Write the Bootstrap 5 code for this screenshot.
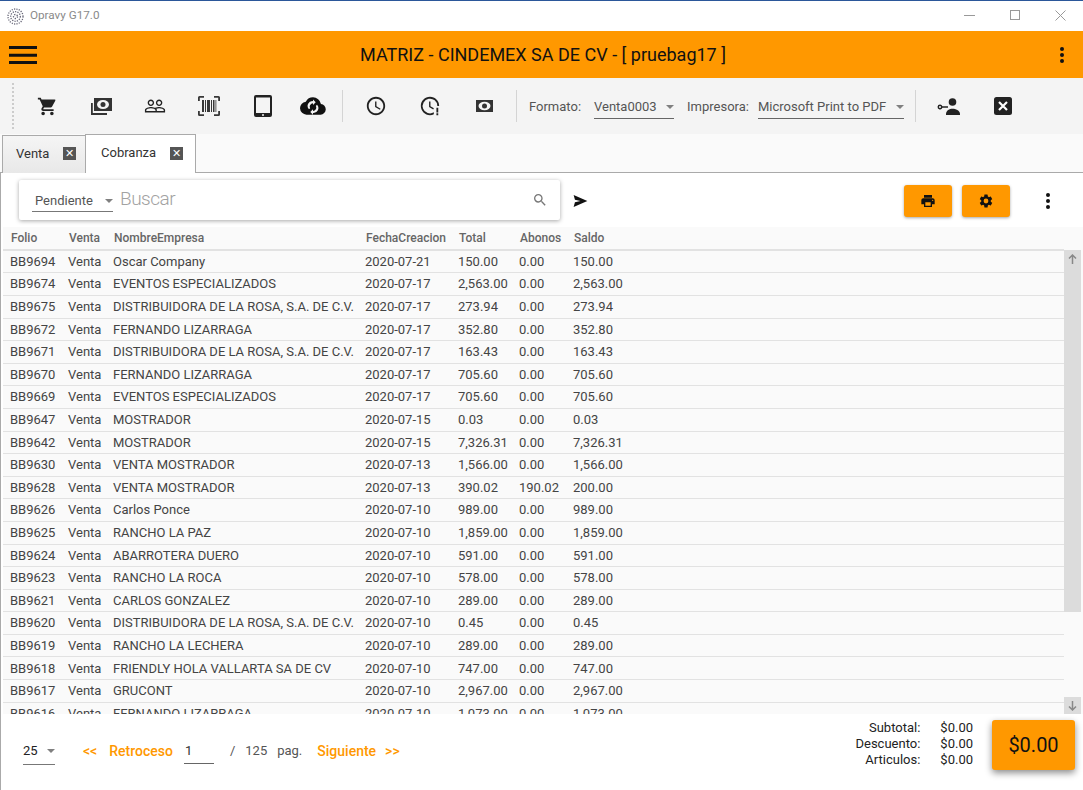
<!doctype html>
<html lang="es"><head><meta charset="utf-8"><title>Opravy G17.0</title>
<link rel="stylesheet" href="https://cdn.jsdelivr.net/npm/bootstrap@5.3.0/dist/css/bootstrap.min.css">
<style>
html,body{height:790px;overflow:hidden}
body{font-family:Roboto,"Liberation Sans",sans-serif;font-size:13px;color:#333;background:#fff}
svg{display:block}
.win{height:790px;width:1083px;overflow:hidden}
.titlebar{height:31px;border-top:1px solid #2b579a;color:#8a8a8a;font-size:11.7px}
.wicon{width:17px;height:17px;margin-left:7px;margin-right:6px}
.wctlgroup{margin-bottom:2px}
.wctl{width:45.500px}
.appbar{height:47px;background:#ff9800;color:#111;font-size:18px}
.burger{margin-left:9px}
.apptitle{margin-right:10px}
.appkebab{margin-right:18px}
.toolbar{height:56px;background:#f4f4f4;padding-left:12px}
.grip{width:2px;height:46px;border-left:2px dotted #ccc;margin-right:6px}
.tbtn{width:54px;height:40px;color:#222}
.tbtn-cloud{width:46px}
.tbtn-user{width:66px}
.tbtn-close{width:42px}
.tsep{width:1px;height:32px;background:#d4d4d4}
.tsep-a{margin:0 6px}
.tsep-b{margin-left:5px}
.tlabel{color:#555;margin-top:2px}
.tlabel-first{margin-left:12px}
.fsel{border-bottom:1px solid #666;color:#555;height:26px;padding-top:2px}
.caret{width:0;height:0;border-left:4px solid transparent;border-right:4px solid transparent;border-top:4px solid #808080}
.fsel-a{width:80px;margin:0 13px 0 13px}
.fsel-b{width:146px;margin:0 11px 0 9px}
.tabstrip{height:39px;background:#fafafa;border-bottom:1px solid #aaa;padding-left:2px}
.tabitem{height:38px;border:1px solid #aaa;border-bottom:0;background:linear-gradient(#f5f5f5,#e8e8e8);color:#333;margin-top:1px;padding-left:13px;padding-bottom:2px}
.tabitem.is-on{background:#fff;height:39px;margin-top:0;margin-bottom:-1px;z-index:1;padding-left:15px;margin-left:-1px;padding-bottom:2px}
.tab-a{width:84px}
.tab-b{width:111px}
.tabx{width:13px;height:13px;background:#555;color:#fff;margin-left:14px;font-size:11px;line-height:13px}
.mainpane{height:617px;border-left:1px solid #aaa}
.searchrow{height:54px}
.searchbox{width:541px;height:40px;margin-left:18px;box-shadow:0 1px 4px rgba(0,0,0,.35);border-radius:2px;background:#fff;padding:0 12px 0 13px}
.psel{width:81px;height:22px;border-bottom:1px solid #777;color:#555;padding-left:3px;margin-top:2px}
.buscar{font-size:19px;letter-spacing:-.5px;color:#a2a2a2;margin-left:7px;margin-bottom:2px;font-weight:300}
.sendicon{margin-left:13px;margin-top:2px}
.actgroup{gap:10px;margin-top:2px;margin-right:7px}
.actbtn{width:48px;height:32px;background:#ff9800;border-radius:3px;box-shadow:0 1px 3px rgba(0,0,0,.35)}
.kebabcell{width:56px}
.gridouter{background:#fafafa;height:487px;margin-left:2px}
.gridwrap{height:487px;overflow:hidden}
.gridtbl{width:1061px;table-layout:fixed;border-collapse:collapse;color:#444;font-size:13px}
.gridtbl th{font-weight:500;font-size:12px;color:#666;height:23.300px;padding:0 0 0 8px;white-space:nowrap}
.gridtbl td{height:22.6px;padding:0 0 0 7px;border-top:1px solid #e2e2e2;white-space:nowrap;overflow:hidden}
.gridtbl tbody tr:first-child td{border-top:2px solid #e2e2e2}
.vscroll{width:17px;height:487px;padding-top:23px;margin-right:2px}
.vthumb{height:345px;background:#dcdcdc}
.varrow{height:17px;background:#dcdcdc}
.foot{height:76px;color:#555;padding-left:22px}
.foot>span{margin-bottom:2px}
.osel{width:32px;height:26px;border-bottom:1px solid #777;color:#222;padding-bottom:2px}
.pglink{color:#ff9800;font-weight:500;font-size:14px}
.pgin{width:30px;height:24px;border-bottom:1px solid #666;color:#333;padding-left:1px;padding-bottom:1px}
.sumgroup{align-self:flex-start;margin-top:6px}
.sumlbl{color:#222;line-height:16px;font-size:13px;margin-bottom:2px}
.sumvals{margin-left:20px}
.totbtn{width:83px;height:50px;background:#ff9800;border-radius:3px;box-shadow:0 3px 7px rgba(0,0,0,.45);font-size:20px;color:#111;margin:0 8px 0 19px}
.gapl-28{margin-left:28px}.gapl-12{margin-left:12px}.gapl-11{margin-left:11px}.gapl-16{margin-left:16px}.gapl-15{margin-left:15px}.gapl-10{margin-left:10px}.gapl-9{margin-left:9px}
</style></head><body>
<div class="win d-flex flex-column">
<div class="titlebar d-flex align-items-center">
<svg class="wicon" viewBox="0 0 17 17" fill="none" stroke="#667" stroke-width="1.3" stroke-dasharray="1.2 1.2"><circle cx="8.5" cy="8.5" r="7.5"/><circle cx="8.5" cy="8.5" r="4.8"/><circle cx="8.5" cy="8.5" r="2"/></svg>
<span>Opravy G17.0</span>
<div class="ms-auto d-flex align-items-center wctlgroup">
<div class="wctl d-flex justify-content-center"><svg width="11" height="11"><path d="M0 5.5h11" stroke="#999"/></svg></div>
<div class="wctl d-flex justify-content-center"><svg width="10" height="10"><rect x=".5" y=".5" width="9" height="9" fill="none" stroke="#999"/></svg></div>
<div class="wctl d-flex justify-content-center"><svg width="11" height="11"><path d="M.5.5l10 10M10.5.5l-10 10" stroke="#999"/></svg></div>
</div></div>

<div class="appbar d-flex align-items-center">
<svg class="burger" width="28" height="18" viewBox="0 0 28 18"><path d="M0 1.500h28M0 9.200h28M0 16.500h28" stroke="#111" stroke-width="3"/></svg>
<div class="flex-grow-1 text-center apptitle">MATRIZ - CINDEMEX SA DE CV - [ pruebag17 ]</div>
<svg class="appkebab" width="6" height="18" viewBox="0 0 6 18" fill="#111"><circle cx="3" cy="3" r="2"/><circle cx="3" cy="9" r="2"/><circle cx="3" cy="15" r="2"/></svg>
</div>

<div class="toolbar d-flex align-items-center">
<div class="grip"></div>
<div class="tbtn d-flex align-items-center justify-content-center"><svg width="21" height="21" viewBox="0 0 24 24" fill="#222"><path d="M7 18c-1.1 0-2 .9-2 2s.9 2 2 2 2-.9 2-2-.9-2-2-2zM1 2v2h2l3.6 7.59-1.35 2.45c-.16.28-.25.61-.25.96 0 1.1.9 2 2 2h12v-2H7.42c-.14 0-.25-.11-.25-.25l.03-.12.9-1.63h7.45c.75 0 1.41-.41 1.75-1.03l3.58-6.49A1 1 0 0 0 20 4H5.21l-.94-2H1zm16 16c-1.1 0-2 .9-2 2s.9 2 2 2 2-.9 2-2-.9-2-2-2z"/></svg></div>
<div class="tbtn d-flex align-items-center justify-content-center"><svg width="21" height="17" viewBox="0 0 21 17"><path d="M0 5h1.800v10H16v2H0z" fill="#333"/><rect x="3" y="0" width="18" height="13" fill="#333"/><ellipse cx="12" cy="6.500" rx="6" ry="4.500" fill="#f4f4f4"/><circle cx="12" cy="6.500" r="2.500" fill="#333"/></svg></div>
<div class="tbtn d-flex align-items-center justify-content-center"><svg width="22" height="22" viewBox="0 0 24 24" fill="#222"><path d="M16.5 13c-1.2 0-3.07.34-4.5 1-1.43-.67-3.3-1-4.5-1C5.33 13 1 14.08 1 16.25V19h22v-2.75c0-2.17-4.33-3.25-6.5-3.25zm-4 4.5h-10v-1.25c0-.54 2.56-1.75 5-1.75s5 1.21 5 1.75v1.25zm9 0H14v-1.25c0-.46-.2-.86-.52-1.22.88-.3 1.96-.53 3.02-.53 2.44 0 5 1.21 5 1.75v1.25zM7.5 12c1.93 0 3.5-1.57 3.5-3.5S9.43 5 7.5 5 4 6.57 4 8.5 5.57 12 7.5 12zm0-5.5c1.1 0 2 .9 2 2s-.9 2-2 2-2-.9-2-2 .9-2 2-2zm9 5.5c1.93 0 3.5-1.57 3.5-3.5S18.43 5 16.5 5 13 6.57 13 8.5s1.57 3.5 3.5 3.5zm0-5.5c1.1 0 2 .9 2 2s-.9 2-2 2-2-.9-2-2 .9-2 2-2z"/></svg></div>
<div class="tbtn d-flex align-items-center justify-content-center"><svg width="24" height="22" viewBox="0 0 24 22" fill="#222"><path d="M1 6V2.500A1.500 1.500 0 0 1 2.500 1H7v1.800H2.800V6zM17 1h4.500A1.500 1.500 0 0 1 23 2.500V6h-1.800V2.800H17zM1 16h1.800v3.200H7V21H2.500A1.500 1.500 0 0 1 1 19.500zM21.200 16H23v3.500a1.500 1.500 0 0 1-1.500 1.500H17v-1.800h4.200zM5 5h2v12H5zM8 5h1v12H8zM10 5h3v12h-3zM14 5h1v12h-1zM16 5h1.500v12H16zM18.500 5h.8v12h-.8z" opacity=".9"/></svg></div>
<div class="tbtn d-flex align-items-center justify-content-center"><svg width="24" height="24" viewBox="0 0 24 24" fill="#222"><path d="M19 1H5a2 2 0 0 0-2 2v18a2 2 0 0 0 2 2h14a2 2 0 0 0 2-2V3a2 2 0 0 0-2-2zm-7 21a1 1 0 1 1 0-2 1 1 0 0 1 0 2zm7-3H5V3.500h14z"/></svg></div>
<div class="tbtn tbtn-cloud d-flex align-items-center justify-content-center"><svg width="26" height="26" viewBox="0 0 24 24" fill="#111"><path fill-rule="evenodd" d="M19.350 10.040A7.490 7.490 0 0 0 12 4a7.500 7.500 0 0 0-6.650 4.040A6 6 0 0 0 6 20h13a5 5 0 0 0 .35-9.960zM12 7.500V6l2.500 2.500L12 11V9.500a3 3 0 0 0-2.600 4.500l-1.100 1.100A4.500 4.500 0 0 1 12 7.500zm0 11V20l-2.500-2.500L12 15v1.500a3 3 0 0 0 2.600-4.500l1.100-1.100A4.500 4.500 0 0 1 12 18.500z"/></svg></div>
<div class="tsep tsep-a"></div>
<div class="tbtn d-flex align-items-center justify-content-center"><svg width="22" height="22" viewBox="0 0 24 24" fill="#222"><path d="M11.990 2C6.470 2 2 6.480 2 12s4.470 10 9.990 10C17.520 22 22 17.520 22 12S17.520 2 11.990 2zM12 20c-4.420 0-8-3.580-8-8s3.580-8 8-8 8 3.580 8 8-3.580 8-8 8zm.5-13H11v6l5.250 3.150.75-1.230-4.500-2.670z"/></svg></div>
<div class="tbtn d-flex align-items-center justify-content-center"><svg width="22" height="22" viewBox="0 0 24 24" fill="#222"><path d="M12 2C6.480 2 2 6.480 2 12s4.480 10 10 10c1.500 0 2.900-.33 4.200-.92v-2.250A8 8 0 1 1 20 12h2c0-5.520-4.480-10-10-10zm.5 5H11v6l4.500 2.700.75-1.230-3.750-2.220zM19 14h2v5h-2zm0 6h2v2h-2z"/></svg></div>
<div class="tbtn d-flex align-items-center justify-content-center"><svg width="17" height="12" viewBox="0 0 17 12"><rect width="17" height="12" fill="#333"/><ellipse cx="8.500" cy="6" rx="6" ry="4.200" fill="#f4f4f4"/><circle cx="8.500" cy="6" r="2.500" fill="#333"/></svg></div>
<div class="tsep tsep-b"></div>
<span class="tlabel tlabel-first">Formato:</span>
<div class="fsel fsel-a d-flex align-items-center justify-content-between"><span>Venta0003</span><span class="caret"></span></div>
<span class="tlabel">Impresora:</span>
<div class="fsel fsel-b d-flex align-items-center justify-content-between"><span>Microsoft Print to PDF</span><span class="caret"></span></div>
<div class="tsep"></div>
<div class="tbtn tbtn-user d-flex align-items-center justify-content-center"><svg width="24" height="17" viewBox="0 0 24 17" fill="#222"><circle cx="15.500" cy="4" r="3.800"/><path d="M9 16c0-3.500 3.500-5.200 6.500-5.200S23 12.500 23 16v1H9z"/><path fill-rule="evenodd" d="M3 6.500a2.500 2.500 0 0 1 2.400 1.700H11v1.600H5.400A2.500 2.500 0 1 1 3 6.500zm0 1.500a1 1 0 1 0 0 2 1 1 0 0 0 0-2z"/></svg></div>
<div class="tbtn tbtn-close d-flex align-items-center justify-content-center"><svg width="18" height="18" viewBox="0 0 18 18"><rect width="18" height="18" rx="2.500" fill="#222"/><path d="M5 5l8 8M13 5l-8 8" stroke="#fff" stroke-width="2.200"/></svg></div>
</div>

<div class="tabstrip d-flex align-items-start">
<div class="tabitem tab-a d-flex align-items-center"><span>Venta</span><span class="tabx text-center">✕</span></div>
<div class="tabitem is-on tab-b d-flex align-items-center"><span>Cobranza</span><span class="tabx text-center">✕</span></div>
</div>

<div class="mainpane d-flex flex-column">
<div class="searchrow d-flex align-items-center">
<div class="searchbox d-flex align-items-center">
<div class="psel d-flex align-items-center justify-content-between"><span>Pendiente</span><span class="caret"></span></div>
<span class="buscar">Buscar</span>
<svg class="ms-auto" width="16" height="16" viewBox="0 0 24 24" fill="#777"><path d="M15.500 14h-.79l-.28-.27A6.470 6.470 0 0 0 16 9.500 6.500 6.500 0 1 0 9.500 16c1.610 0 3.090-.59 4.230-1.570l.27.28v.79l5 4.990L20.490 19l-4.990-5zm-6 0C7.010 14 5 11.990 5 9.500S7.010 5 9.500 5 14 7.010 14 9.500 11.990 14 9.500 14z"/></svg>
</div>
<svg class="sendicon" width="15" height="12" viewBox="0 0 16 14" fill="#111"><path d="M0 0l16 7-16 7 1.500-5.500L8 7 1.500 5.500z"/></svg>
<div class="ms-auto d-flex align-items-center actgroup">
<div class="actbtn d-flex align-items-center justify-content-center"><svg width="16" height="16" viewBox="0 0 24 24" fill="#111"><path d="M19 8H5c-1.660 0-3 1.340-3 3v6h4v4h12v-4h4v-6c0-1.660-1.340-3-3-3zm-3 11H8v-5h8v5zm3-7c-.55 0-1-.45-1-1s.45-1 1-1 1 .45 1 1-.45 1-1 1zm-1-9H6v4h12V3z"/></svg></div>
<div class="actbtn d-flex align-items-center justify-content-center"><svg width="16" height="16" viewBox="0 0 24 24" fill="#111"><path d="M19.140 12.940c.04-.3.060-.61.060-.94 0-.32-.02-.64-.07-.94l2.030-1.580a.49.49 0 0 0 .12-.61l-1.920-3.320a.49.49 0 0 0-.59-.22l-2.390.96c-.5-.38-1.030-.7-1.620-.94l-.36-2.540a.48.480 0 0 0-.48-.41h-3.840c-.24 0-.43.17-.47.41l-.36 2.540c-.59.24-1.130.57-1.620.94l-2.390-.96a.49.49 0 0 0-.59.22L2.740 8.870c-.12.21-.08.47.12.61l2.030 1.580c-.05.3-.09.63-.09.94s.02.64.07.94l-2.030 1.580a.49.49 0 0 0-.12.61l1.920 3.320c.12.22.37.29.59.22l2.390-.96c.5.38 1.030.7 1.620.94l.36 2.540c.05.24.24.41.48.41h3.840c.24 0 .44-.17.47-.41l.36-2.540c.59-.24 1.130-.56 1.620-.94l2.390.96c.22.080.47 0 .59-.22l1.920-3.320a.49.49 0 0 0-.12-.61l-2.010-1.580zM12 15.600A3.610 3.610 0 0 1 8.400 12 3.610 3.610 0 0 1 12 8.400a3.610 3.610 0 0 1 3.600 3.600 3.610 3.610 0 0 1-3.600 3.600z"/></svg></div>
<div class="d-flex justify-content-center kebabcell"><svg width="6" height="18" viewBox="0 0 6 18" fill="#111"><circle cx="3" cy="3" r="2"/><circle cx="3" cy="9" r="2"/><circle cx="3" cy="15" r="2"/></svg></div>
</div>
</div>
<div class="d-flex gridouter">
<div class="gridwrap flex-grow-1">
<table class="gridtbl"><colgroup><col style="width:58px"><col style="width:45px"><col style="width:252px"><col style="width:93px"><col style="width:61px"><col style="width:54px"><col style="width:60px"><col></colgroup>
<thead><tr><th>Folio</th><th>Venta</th><th>NombreEmpresa</th><th>FechaCreacion</th><th>Total</th><th>Abonos</th><th>Saldo</th><th></th></tr></thead>
<tbody>
<tr><td>BB9694</td><td>Venta</td><td>Oscar Company</td><td>2020-07-21</td><td>150.00</td><td>0.00</td><td>150.00</td><td></td></tr>
<tr><td>BB9674</td><td>Venta</td><td>EVENTOS ESPECIALIZADOS</td><td>2020-07-17</td><td>2,563.00</td><td>0.00</td><td>2,563.00</td><td></td></tr>
<tr><td>BB9675</td><td>Venta</td><td>DISTRIBUIDORA DE LA ROSA, S.A. DE C.V.</td><td>2020-07-17</td><td>273.94</td><td>0.00</td><td>273.94</td><td></td></tr>
<tr><td>BB9672</td><td>Venta</td><td>FERNANDO LIZARRAGA</td><td>2020-07-17</td><td>352.80</td><td>0.00</td><td>352.80</td><td></td></tr>
<tr><td>BB9671</td><td>Venta</td><td>DISTRIBUIDORA DE LA ROSA, S.A. DE C.V.</td><td>2020-07-17</td><td>163.43</td><td>0.00</td><td>163.43</td><td></td></tr>
<tr><td>BB9670</td><td>Venta</td><td>FERNANDO LIZARRAGA</td><td>2020-07-17</td><td>705.60</td><td>0.00</td><td>705.60</td><td></td></tr>
<tr><td>BB9669</td><td>Venta</td><td>EVENTOS ESPECIALIZADOS</td><td>2020-07-17</td><td>705.60</td><td>0.00</td><td>705.60</td><td></td></tr>
<tr><td>BB9647</td><td>Venta</td><td>MOSTRADOR</td><td>2020-07-15</td><td>0.03</td><td>0.00</td><td>0.03</td><td></td></tr>
<tr><td>BB9642</td><td>Venta</td><td>MOSTRADOR</td><td>2020-07-15</td><td>7,326.31</td><td>0.00</td><td>7,326.31</td><td></td></tr>
<tr><td>BB9630</td><td>Venta</td><td>VENTA MOSTRADOR</td><td>2020-07-13</td><td>1,566.00</td><td>0.00</td><td>1,566.00</td><td></td></tr>
<tr><td>BB9628</td><td>Venta</td><td>VENTA MOSTRADOR</td><td>2020-07-13</td><td>390.02</td><td>190.02</td><td>200.00</td><td></td></tr>
<tr><td>BB9626</td><td>Venta</td><td>Carlos Ponce</td><td>2020-07-10</td><td>989.00</td><td>0.00</td><td>989.00</td><td></td></tr>
<tr><td>BB9625</td><td>Venta</td><td>RANCHO LA PAZ</td><td>2020-07-10</td><td>1,859.00</td><td>0.00</td><td>1,859.00</td><td></td></tr>
<tr><td>BB9624</td><td>Venta</td><td>ABARROTERA DUERO</td><td>2020-07-10</td><td>591.00</td><td>0.00</td><td>591.00</td><td></td></tr>
<tr><td>BB9623</td><td>Venta</td><td>RANCHO LA ROCA</td><td>2020-07-10</td><td>578.00</td><td>0.00</td><td>578.00</td><td></td></tr>
<tr><td>BB9621</td><td>Venta</td><td>CARLOS GONZALEZ</td><td>2020-07-10</td><td>289.00</td><td>0.00</td><td>289.00</td><td></td></tr>
<tr><td>BB9620</td><td>Venta</td><td>DISTRIBUIDORA DE LA ROSA, S.A. DE C.V.</td><td>2020-07-10</td><td>0.45</td><td>0.00</td><td>0.45</td><td></td></tr>
<tr><td>BB9619</td><td>Venta</td><td>RANCHO LA LECHERA</td><td>2020-07-10</td><td>289.00</td><td>0.00</td><td>289.00</td><td></td></tr>
<tr><td>BB9618</td><td>Venta</td><td>FRIENDLY HOLA VALLARTA SA DE CV</td><td>2020-07-10</td><td>747.00</td><td>0.00</td><td>747.00</td><td></td></tr>
<tr><td>BB9617</td><td>Venta</td><td>GRUCONT</td><td>2020-07-10</td><td>2,967.00</td><td>0.00</td><td>2,967.00</td><td></td></tr>
<tr><td>BB9616</td><td>Venta</td><td>FERNANDO LIZARRAGA</td><td>2020-07-10</td><td>1,073.00</td><td>0.00</td><td>1,073.00</td><td></td></tr>
</tbody></table>
</div>
<div class="vscroll d-flex flex-column">
<div class="varrow d-flex align-items-center justify-content-center"><svg width="9" height="10" viewBox="0 0 9 10" fill="none" stroke="#888" stroke-width="1.500"><path d="M4.500 10V1M1 4.500l3.500-3.500 3.500 3.500"/></svg></div>
<div class="vthumb"></div>
<div class="flex-grow-1"></div>
<div class="varrow d-flex align-items-center justify-content-center"><svg width="9" height="10" viewBox="0 0 9 10" fill="none" stroke="#888" stroke-width="1.500"><path d="M4.500 0v9M1 5.500l3.500 3.500 3.500-3.500"/></svg></div>
</div>
</div>
<div class="foot d-flex align-items-center">
<div class="osel d-flex align-items-center justify-content-between"><span>25</span><span class="caret"></span></div>
<span class="pglink gapl-28">&lt;&lt;</span>
<span class="pglink gapl-12">Retroceso</span>
<div class="pgin d-flex align-items-center gapl-11">1</div>
<span class="gapl-16">/</span><span class="gapl-10">125</span><span class="gapl-10">pag.</span>
<span class="pglink gapl-15">Siguiente</span>
<span class="pglink gapl-9">&gt;&gt;</span>
<div class="ms-auto d-flex align-items-center sumgroup">
<div class="d-flex text-end sumlbl"><div><div>Subtotal:</div><div>Descuento:</div><div>Articulos:</div></div><div class="sumvals"><div>$0.00</div><div>$0.00</div><div>$0.00</div></div></div>
<div class="totbtn d-flex align-items-center justify-content-center">$0.00</div>
</div>
</div>
</div>
</div>
</body></html>
